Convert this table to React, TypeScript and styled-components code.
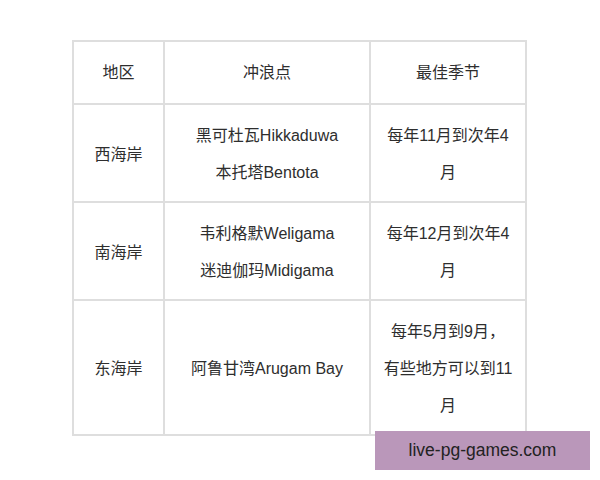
import styled, { createGlobalStyle } from 'styled-components';

const GlobalStyle = createGlobalStyle`
    html, body {
        margin: 0;
        padding: 0;
        background: #ffffff;
    }
`;

type Row = {
    region: string;
    spots: string[];
    season: string[];
};

const rows: Row[] = [
    {
        region: '西海岸',
        spots: ['黑可杜瓦Hikkaduwa', '本托塔Bentota'],
        season: ['每年11月到次年4', '月'],
    },
    {
        region: '南海岸',
        spots: ['韦利格默Weligama', '迷迪伽玛Midigama'],
        season: ['每年12月到次年4', '月'],
    },
    {
        region: '东海岸',
        spots: ['阿鲁甘湾Arugam Bay'],
        season: ['每年5月到9月，', '有些地方可以到11', '月'],
    },
];

const App = () => {
    return (
        <Page>
            <GlobalStyle />
            <Table>
                <thead>
                    <tr>
                        <HeaderCell $width={91}>地区</HeaderCell>
                        <HeaderCell $width={206}>冲浪点</HeaderCell>
                        <HeaderCell $width={156}>最佳季节</HeaderCell>
                    </tr>
                </thead>
                <tbody>
                    {rows.map((row) => (
                        <tr key={row.region}>
                            <Cell>{row.region}</Cell>
                            <Cell>
                                {row.spots.map((line) => (
                                    <Line key={line}>{line}</Line>
                                ))}
                            </Cell>
                            <Cell>
                                {row.season.map((line) => (
                                    <Line key={line}>{line}</Line>
                                ))}
                            </Cell>
                        </tr>
                    ))}
                </tbody>
            </Table>
            <Watermark>live-pg-games.com</Watermark>
        </Page>
    );
};

const Page = styled.div`
    position: relative;
    width: 600px;
    height: 480px;
    padding: 40px 0 0 72px;
    box-sizing: border-box;
    font-family: 'Liberation Sans', 'Noto Sans CJK SC', sans-serif;
`;

const Table = styled.table`
    border-collapse: separate;
    border-spacing: 0;
    table-layout: fixed;
    width: 455px;
    border-top: 2px solid #dedede;
    border-left: 2px solid #dedede;
    color: #2e2e2e;
    font-size: 16px;
`;

const HeaderCell = styled.th<{ $width: number }>`
    width: ${(p) => p.$width}px;
    box-sizing: border-box;
    height: 63px;
    padding: 12px 8px;
    border-right: 2px solid #dedede;
    border-bottom: 2px solid #dedede;
    font-weight: normal;
    text-align: center;
    line-height: 37px;
`;

const Cell = styled.td`
    padding: 12px 8px 10px;
    border-right: 2px solid #dedede;
    border-bottom: 2px solid #dedede;
    text-align: center;
    vertical-align: middle;
    line-height: 37px;
`;

const Line = styled.div`
    white-space: nowrap;
`;

const Watermark = styled.div`
    position: absolute;
    left: 375px;
    top: 431px;
    width: 215px;
    height: 39px;
    display: flex;
    align-items: center;
    justify-content: center;
    background: #ba97ba;
    color: #222222;
    font-size: 17.5px;
    font-family: 'Liberation Sans', sans-serif;
`;

export default App;
